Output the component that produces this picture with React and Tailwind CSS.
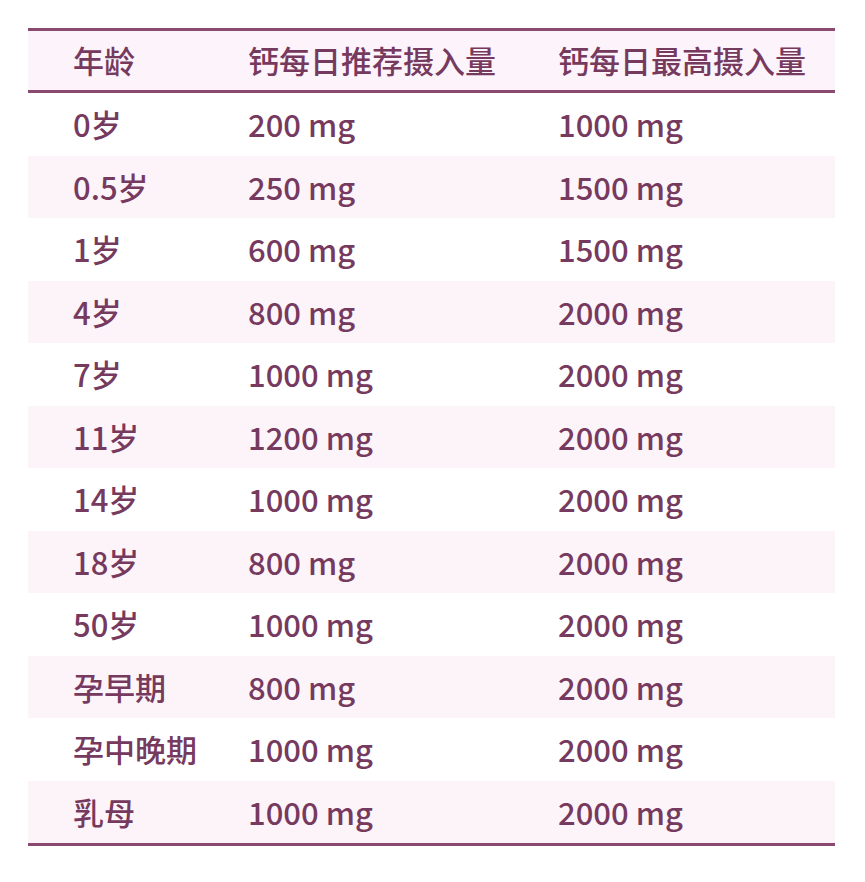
import React from "react";

const rows = [
  ["0岁", "200 mg", "1000 mg"],
  ["0.5岁", "250 mg", "1500 mg"],
  ["1岁", "600 mg", "1500 mg"],
  ["4岁", "800 mg", "2000 mg"],
  ["7岁", "1000 mg", "2000 mg"],
  ["11岁", "1200 mg", "2000 mg"],
  ["14岁", "1000 mg", "2000 mg"],
  ["18岁", "800 mg", "2000 mg"],
  ["50岁", "1000 mg", "2000 mg"],
  ["孕早期", "800 mg", "2000 mg"],
  ["孕中晚期", "1000 mg", "2000 mg"],
  ["乳母", "1000 mg", "2000 mg"],
];

export default function App() {
  return (
    <div
      className="w-[865px] h-[882px] bg-white pt-[28px] pl-[28px] text-[#773a5f] font-medium"
      style={{ fontFamily: '"Noto Sans CJK SC", "Noto Sans", sans-serif' }}
    >
      <div className="w-[807px] border-t-[3px] border-b-[3px] border-[#8a4a70]">
        <div className="flex h-[62px] items-center bg-[#fdf3fa] border-b-[3px] border-[#8a4a70] text-[31px]">
          <div className="w-[220px] pl-[45px]">年龄</div>
          <div className="w-[310px]">钙每日推荐摄入量</div>
          <div>钙每日最高摄入量</div>
        </div>
        {rows.map((r, i) => (
          <div
            key={i}
            className={`flex h-[62.5px] items-center text-[31px] ${i % 2 === 1 ? "bg-[#fdf4fa]" : "bg-white"}`}
          >
            <div className="w-[220px] pl-[45px]">{r[0]}</div>
            <div className="w-[310px]">{r[1]}</div>
            <div>{r[2]}</div>
          </div>
        ))}
      </div>
    </div>
  );
}
